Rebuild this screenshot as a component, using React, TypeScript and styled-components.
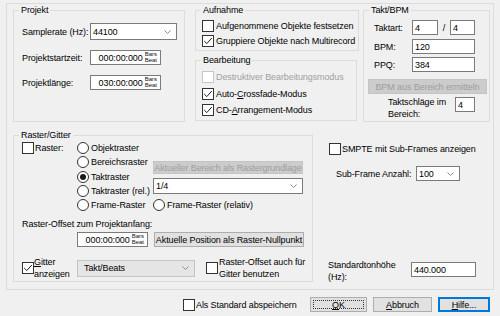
import React from "react";
import styled, { createGlobalStyle } from "styled-components";

const Global = createGlobalStyle`
  html, body { margin: 0; padding: 0; background: #f0f0f0; }
  body {
    font-family: "Liberation Sans", Arial, sans-serif;
    font-size: 9px;
    letter-spacing: -0.1px;
    color: #000;
  }
  * { box-sizing: border-box; }
`;

const Dialog = styled.div`
  width: 500px;
  height: 316px;
  display: flex;
  flex-direction: column;
  background: #f0f0f0;
  overflow: hidden;
`;

const Panel = styled.div`
  margin: 3px 6px 0;
  height: 287px;
  border: 1px solid #dcdcdc;
  padding: 6px 0 0 6px;
  display: flex;
  flex-direction: column;
`;

const Row = styled.div<{ $mt?: number; $ml?: number; $h?: number; $align?: string; $gap?: number }>`
  display: flex;
  align-items: ${(p) => p.$align ?? "center"};
  margin-top: ${(p) => p.$mt ?? 0}px;
  margin-left: ${(p) => p.$ml ?? 0}px;
  gap: ${(p) => p.$gap ?? 0}px;
  ${(p) => (p.$h !== undefined ? `height: ${p.$h}px;` : "")}
  flex-shrink: 0;
`;

const Column = styled.div<{ $w?: number; $ml?: number; $mt?: number; $pl?: number }>`
  display: flex;
  flex-direction: column;
  ${(p) => (p.$w !== undefined ? `width: ${p.$w}px;` : "flex: 1;")}
  margin-left: ${(p) => p.$ml ?? 0}px;
  margin-top: ${(p) => p.$mt ?? 0}px;
  padding-left: ${(p) => p.$pl ?? 0}px;
  flex-shrink: 0;
`;

const Group = styled.div<{ $w: number; $h: number; $ml?: number; $mt?: number }>`
  width: ${(p) => p.$w}px;
  height: ${(p) => p.$h}px;
  margin-left: ${(p) => p.$ml ?? 0}px;
  margin-top: ${(p) => p.$mt ?? 0}px;
  border: 1px solid #dcdcdc;
  display: flex;
  flex-direction: column;
  flex-shrink: 0;
`;

const Legend = styled.div`
  align-self: flex-start;
  margin: -7px 0 0 5px;
  padding: 0 2px;
  height: 12px;
  line-height: 12px;
  background: #f0f0f0;
  white-space: nowrap;
`;

const GroupBody = styled.div<{ $pl: number; $pt: number }>`
  display: flex;
  flex-direction: column;
  padding-left: ${(p) => p.$pl}px;
  padding-top: ${(p) => p.$pt}px;
`;

const FieldLabel = styled.span<{ $w?: number; $ml?: number }>`
  ${(p) => (p.$w !== undefined ? `width: ${p.$w}px;` : "")}
  margin-left: ${(p) => p.$ml ?? 0}px;
  flex-shrink: 0;
  white-space: nowrap;
  line-height: 12px;
`;

const Box = styled.div<{ $w: number; $h: number; $right?: boolean; $ml?: number; $mt?: number }>`
  width: ${(p) => p.$w}px;
  height: ${(p) => p.$h}px;
  margin-left: ${(p) => p.$ml ?? 0}px;
  margin-top: ${(p) => p.$mt ?? 0}px;
  border: 1px solid #7a7a7a;
  background: #fff;
  display: flex;
  align-items: center;
  justify-content: ${(p) => (p.$right ? "flex-end" : "flex-start")};
  padding: 0 2px;
  flex-shrink: 0;
  white-space: nowrap;
`;

const SelectBox = styled.div<{ $w: number; $h: number; $gray?: boolean; $ml?: number; $mt?: number }>`
  width: ${(p) => p.$w}px;
  height: ${(p) => p.$h}px;
  margin-left: ${(p) => p.$ml ?? 0}px;
  margin-top: ${(p) => p.$mt ?? 0}px;
  border: 1px solid ${(p) => (p.$gray ? "#c4c4c4" : "#7a7a7a")};
  background: ${(p) => (p.$gray ? "#e5e5e5" : "#fff")};
  display: flex;
  align-items: center;
  padding: 0 5px 0 ${(p) => (p.$gray ? 6 : 2)}px;
  flex-shrink: 0;
  white-space: nowrap;
`;

const SelectValue = styled.span`
  flex: 1;
`;

const Chevron = () => (
  <svg width="7" height="4" viewBox="0 0 7 4">
    <path d="M0.5 0.5 L3.5 3.5 L6.5 0.5" fill="none" stroke="#8a8a8a" strokeWidth="1" />
  </svg>
);

const Select = ({ w, h, value, gray, ml, mt }: { w: number; h: number; value: string; gray?: boolean; ml?: number; mt?: number }) => (
  <SelectBox $w={w} $h={h} $gray={gray} $ml={ml} $mt={mt}>
    <SelectValue>{value}</SelectValue>
    <Chevron />
  </SelectBox>
);

const BarsBeat = styled.span`
  display: flex;
  flex-direction: column;
  font-size: 6px;
  line-height: 5.5px;
  letter-spacing: 0;
  margin-left: 2px;
  margin-right: 1px;
  color: #111;
`;

const TimeBox = ({ w, value, ml }: { w: number; value: string; ml?: number }) => (
  <Box $w={w} $h={15} $right $ml={ml}>
    <span>{value}</span>
    <BarsBeat>
      <span>Bars</span>
      <span>Beat</span>
    </BarsBeat>
  </Box>
);

const CheckBoxBox = styled.span<{ $disabled?: boolean }>`
  width: 12px;
  height: 12px;
  border: 1px solid ${(p) => (p.$disabled ? "#c6c6c6" : "#333")};
  background: #fff;
  display: flex;
  align-items: center;
  justify-content: center;
  flex-shrink: 0;
`;

const Check = ({ checked, disabled }: { checked?: boolean; disabled?: boolean }) => (
  <CheckBoxBox $disabled={disabled}>
    {checked && (
      <svg width="10" height="10" viewBox="0 0 10 10">
        <path d="M1.2 5 L3.8 7.6 L8.8 2" fill="none" stroke="#1a1a1a" strokeWidth="1" />
      </svg>
    )}
  </CheckBoxBox>
);

const RadioCircle = styled.span`
  width: 12px;
  height: 12px;
  border: 1px solid #333;
  border-radius: 50%;
  background: #fff;
  display: flex;
  align-items: center;
  justify-content: center;
  flex-shrink: 0;
`;

const RadioDot = styled.span`
  width: 6px;
  height: 6px;
  border-radius: 50%;
  background: #1a1a1a;
`;

const Item = styled.div<{ $h: number; $gap?: number; $disabled?: boolean; $mt?: number; $ml?: number }>`
  display: flex;
  align-items: center;
  height: ${(p) => p.$h}px;
  gap: ${(p) => p.$gap ?? 2}px;
  margin-top: ${(p) => p.$mt ?? 0}px;
  margin-left: ${(p) => p.$ml ?? 0}px;
  color: ${(p) => (p.$disabled ? "#a0a0a0" : "#000")};
  white-space: nowrap;
  flex-shrink: 0;
`;

const Radio = ({ label, checked, h }: { label: string; checked?: boolean; h: number }) => (
  <Item $h={h} $gap={2}>
    <RadioCircle>{checked && <RadioDot />}</RadioCircle>
    <span>{label}</span>
  </Item>
);

const TwoLine = styled.span<{ $ml?: number; $w?: number }>`
  line-height: 12px;
  margin-left: ${(p) => p.$ml ?? 0}px;
  ${(p) => (p.$w !== undefined ? `width: ${p.$w}px;` : "")}
  white-space: nowrap;
  flex-shrink: 0;
`;

const Btn = styled.div<{ $w: number; $h: number; $disabled?: boolean; $default?: boolean; $ml?: number; $mt?: number }>`
  width: ${(p) => p.$w}px;
  height: ${(p) => p.$h}px;
  margin-left: ${(p) => p.$ml ?? 0}px;
  margin-top: ${(p) => p.$mt ?? 0}px;
  background: ${(p) => (p.$disabled ? "#cccccc" : "#e1e1e1")};
  border: 1px solid ${(p) => (p.$disabled ? "#c4c4c4" : p.$default ? "#0078d7" : "#adadad")};
  box-shadow: ${(p) => (p.$default ? "inset 0 0 0 1px #0078d7" : "none")};
  color: ${(p) => (p.$disabled ? "#9d9d9d" : "#000")};
  display: flex;
  align-items: center;
  justify-content: center;
  white-space: nowrap;
  flex-shrink: 0;
`;

const FocusRect = styled.span`
  flex: 1;
  align-self: stretch;
  margin: 2px;
  border: 1px dotted #333;
  display: flex;
  align-items: center;
  justify-content: center;
`;

const Footer = styled.div`
  display: flex;
  align-items: center;
  margin-top: 7px;
  padding: 0 10px 0 183px;
  height: 15px;
`;

const FooterButtons = styled.div`
  display: flex;
  margin-left: auto;
  gap: 6px;
`;

const Slash = styled.span`
  width: 12px;
  text-align: center;
  flex-shrink: 0;
`;

export default function App() {
  return (
    <Dialog>
      <Global />
      <Panel>
        <Row $align="flex-start">
          <Group $w={172} $h={112}>
            <Legend>Projekt</Legend>
            <GroupBody $pl={8} $pt={7}>
              <Row $h={17}>
                <FieldLabel $w={68}>Samplerate (Hz):</FieldLabel>
                <Select w={87} h={17} value="44100" />
              </Row>
              <Row $h={15} $mt={10}>
                <FieldLabel $w={68}>Projektstartzeit:</FieldLabel>
                <TimeBox w={71} value="000:00:000" />
              </Row>
              <Row $h={15} $mt={10}>
                <FieldLabel $w={68}>Projektlänge:</FieldLabel>
                <TimeBox w={71} value="030:00:000" />
              </Row>
            </GroupBody>
          </Group>

          <Column $w={164} $ml={10}>
            <Group $w={164} $h={41}>
              <Legend>Aufnahme</Legend>
              <GroupBody $pl={6} $pt={2}>
                <Item $h={15}>
                  <Check />
                  <span>Aufgenommene Objekte festsetzen</span>
                </Item>
                <Item $h={15}>
                  <Check checked />
                  <span>Gruppiere Objekte nach Multirecord</span>
                </Item>
              </GroupBody>
            </Group>
            <Group $w={162} $h={61} $mt={9}>
              <Legend>Bearbeitung</Legend>
              <GroupBody $pl={6} $pt={3}>
                <Item $h={16.5} $disabled>
                  <Check disabled />
                  <span>Destruktiver Bearbeitungsmodus</span>
                </Item>
                <Item $h={16.5}>
                  <Check checked />
                  <span>
                    Auto-<u>C</u>rossfade-Modus
                  </span>
                </Item>
                <Item $h={16.5}>
                  <Check checked />
                  <span>
                    CD-<u>A</u>rrangement-Modus
                  </span>
                </Item>
              </GroupBody>
            </Group>
          </Column>

          <Group $w={127} $h={112} $ml={4}>
            <Legend>Takt/BPM</Legend>
            <GroupBody $pl={10} $pt={4}>
              <Row $h={15}>
                <FieldLabel $w={38}>Taktart:</FieldLabel>
                <Box $w={26} $h={15}>4</Box>
                <Slash>/</Slash>
                <Box $w={25} $h={15}>4</Box>
              </Row>
              <Row $h={15} $mt={4}>
                <FieldLabel $w={38}>BPM:</FieldLabel>
                <Box $w={63} $h={15}>120</Box>
              </Row>
              <Row $h={15} $mt={3}>
                <FieldLabel $w={38}>PPQ:</FieldLabel>
                <Box $w={63} $h={15}>384</Box>
              </Row>
              <Btn $w={119} $h={15} $mt={7} $ml={-6} $disabled>
                BPM aus Bereich ermitteln
              </Btn>
              <Row $mt={2} $align="flex-start">
                <TwoLine $ml={14} $w={67}>
                  Taktschläge im
                  <br />
                  Bereich:
                </TwoLine>
                <Box $w={20} $h={15} $mt={1}>4</Box>
              </Row>
            </GroupBody>
          </Group>
        </Row>

        <Row $align="flex-start" $mt={13}>
          <Group $w={300} $h={147}>
            <Legend>Raster/Gitter</Legend>
            <GroupBody $pl={8} $pt={0}>
              <Row $align="flex-start">
                <Column $w={55}>
                  <Item $h={14.25} $gap={1}>
                    <Check />
                    <span>Raster:</span>
                  </Item>
                </Column>
                <Column $w={76}>
                  <Radio h={14.25} label="Objektraster" />
                  <Radio h={14.25} label="Bereichsraster" />
                  <Radio h={14.25} label="Taktraster" checked />
                  <Radio h={14.25} label="Taktraster (rel.)" />
                  <Radio h={14.25} label="Frame-Raster" />
                </Column>
                <Column $w={150} $mt={20}>
                  <Btn $w={150} $h={13} $disabled>
                    Aktueller Bereich als Rastergrundlage
                  </Btn>
                  <Select w={150} h={16} value="1/4" mt={4} />
                  <Item $h={14} $mt={4}>
                    <RadioCircle />
                    <span>Frame-Raster (relativ)</span>
                  </Item>
                </Column>
              </Row>
              <Row $mt={6} $h={12}>
                <FieldLabel>Raster-Offset zum Projektanfang:</FieldLabel>
              </Row>
              <Row $mt={2} $h={15}>
                <TimeBox w={71} value="000:00:000" ml={55} />
                <Btn $w={150} $h={15} $ml={6}>
                  Aktuelle Position als Raster-Nullpunkt
                </Btn>
              </Row>
              <Row $mt={9} $h={24}>
                <Row $h={24}>
                  <Check checked />
                  <TwoLine $w={43}>
                    <u>G</u>itter
                    <br />
                    anzeigen
                  </TwoLine>
                </Row>
                <Select w={118} h={17} value="Takt/Beats" gray />
                <Row $h={24} $ml={11} $gap={1}>
                  <Check />
                  <TwoLine>
                    Raster-Offset auch für
                    <br />
                    Gitter benutzen
                  </TwoLine>
                </Row>
              </Row>
            </GroupBody>
          </Group>

          <Column $pl={16}>
            <Item $h={14} $mt={7} $gap={1}>
              <Check />
              <span>SMPTE mit Sub-Frames anzeigen</span>
            </Item>
            <Row $mt={10} $h={15}>
              <FieldLabel $w={80} $ml={7}>Sub-Frame Anzahl:</FieldLabel>
              <Select w={44} h={15} value="100" />
            </Row>
            <Row $mt={78} $align="flex-start">
              <TwoLine $w={83} $ml={-1}>
                Standardtonhöhe
                <br />
                (Hz):
              </TwoLine>
              <Box $w={65} $h={15} $mt={3}>440.000</Box>
            </Row>
          </Column>
        </Row>
      </Panel>

      <Footer>
        <Item $h={15} $gap={1}>
          <Check />
          <span>Als Standard abspeichern</span>
        </Item>
        <FooterButtons>
          <Btn $w={57} $h={15}>
            <FocusRect>
              <u>O</u>K
            </FocusRect>
          </Btn>
          <Btn $w={59} $h={15}>
            <span>
              <u>A</u>bbruch
            </span>
          </Btn>
          <Btn $w={52} $h={15} $default>
            <span>
              <u>H</u>ilfe...
            </span>
          </Btn>
        </FooterButtons>
      </Footer>
    </Dialog>
  );
}
